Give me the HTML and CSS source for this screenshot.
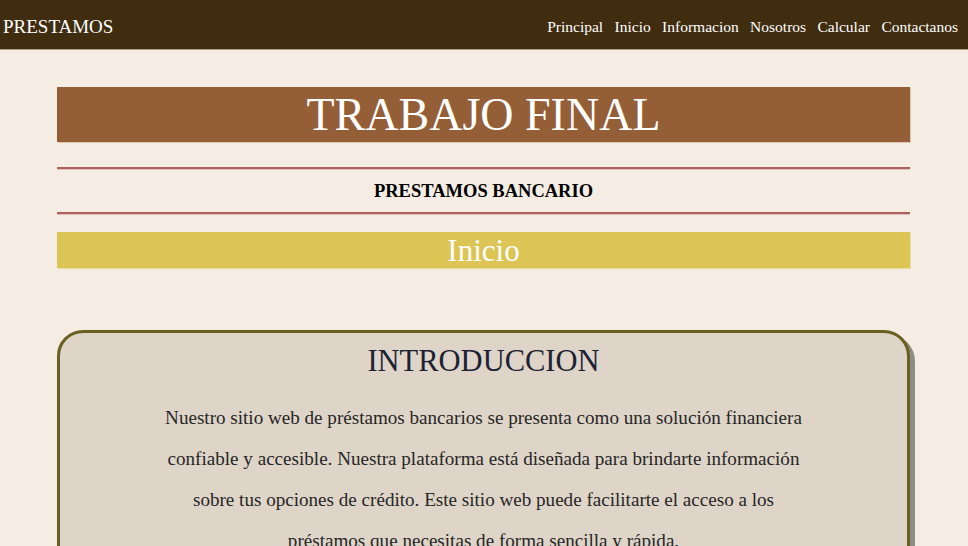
FILE: index.html
```html
<!DOCTYPE html>
<html lang="es">
<head>
<meta charset="utf-8">
<title>Prestamos</title>
<link rel="stylesheet" href="styles.css">
</head>
<body>
<header class="nav">
  <div class="brand">PRESTAMOS</div>
  <nav class="links">
    <a href="#">Principal</a>
    <a href="#">Inicio</a>
    <a href="#">Informacion</a>
    <a href="#">Nosotros</a>
    <a href="#">Calcular</a>
    <a href="#">Contactanos</a>
  </nav>
</header>
<main class="main">
  <h1 class="title">TRABAJO FINAL</h1>
  <hr class="rule">
  <h3 class="subtitle">PRESTAMOS BANCARIO</h3>
  <hr class="rule">
  <h2 class="section">Inicio</h2>
  <section class="card">
    <h2 class="card-title">INTRODUCCION</h2>
    <p class="card-text">Nuestro sitio web de préstamos bancarios se presenta como una solución financiera confiable y accesible. Nuestra plataforma está diseñada para brindarte información sobre tus opciones de crédito. Este sitio web puede facilitarte el acceso a los préstamos que necesitas de forma sencilla y rápida.</p>
  </section>
</main>
</body>
</html>
```
FILE: styles.css
```css
html, body {
  margin: 0;
  padding: 0;
}
body {
  background: #f5ede3;
  font-family: "Liberation Serif", "Times New Roman", serif;
}
.nav {
  height: 50px;
  background: #402d10;
  border-bottom: 1px solid #a89c8c;
  display: flex;
  align-items: center;
  justify-content: space-between;
  padding: 4px 10px 0 3px;
  box-sizing: border-box;
}
.brand {
  color: #fff;
  font-size: 19px;
}
.links {
  display: flex;
  gap: 11.4px;
}
.links a {
  color: #fff;
  text-decoration: none;
  font-size: 15.5px;
}
.main {
  width: 853px;
  margin: 0 58px 0 57px;
  padding-top: 37px;
}
.title {
  margin: 0;
  height: 55px;
  background: #945e36;
  color: #fff;
  font-weight: normal;
  font-size: 46px;
  line-height: 55px;
  text-align: center;
  box-shadow: 1px 1px 0 #e2c7b0;
}
.rule {
  margin: 0;
  border: none;
  height: 2px;
  background: #b05f5f;
  box-shadow: 0 1px 0 #e0c0bc;
}
.title + .rule {
  margin-top: 25px;
}
.subtitle {
  margin: 0;
  height: 43px;
  font-size: 18.5px;
  line-height: 44px;
  text-align: center;
  color: #000;
}
.section {
  margin: 18px 0 0;
  height: 36px;
  background: #dcc455;
  color: #fff;
  font-weight: normal;
  font-size: 31px;
  line-height: 38px;
  text-align: center;
  box-shadow: 1px 1px 0 #ecdca0;
}
.card {
  margin-top: 62px;
  background: #ded5c8;
  border: 3px solid #6b5f22;
  border-radius: 26px;
  box-shadow: 5px 5px 0 #8f8c86;
  padding: 10px 0 20px;
  box-sizing: border-box;
}
.card-title {
  margin: 0;
  font-weight: normal;
  font-size: 30.5px;
  line-height: 36px;
  text-align: center;
  color: #1c2233;
}
.card-text {
  max-width: 650px;
  margin: 18px auto 0;
  font-size: 19.1px;
  line-height: 41px;
  text-align: center;
  color: #262626;
}
```
